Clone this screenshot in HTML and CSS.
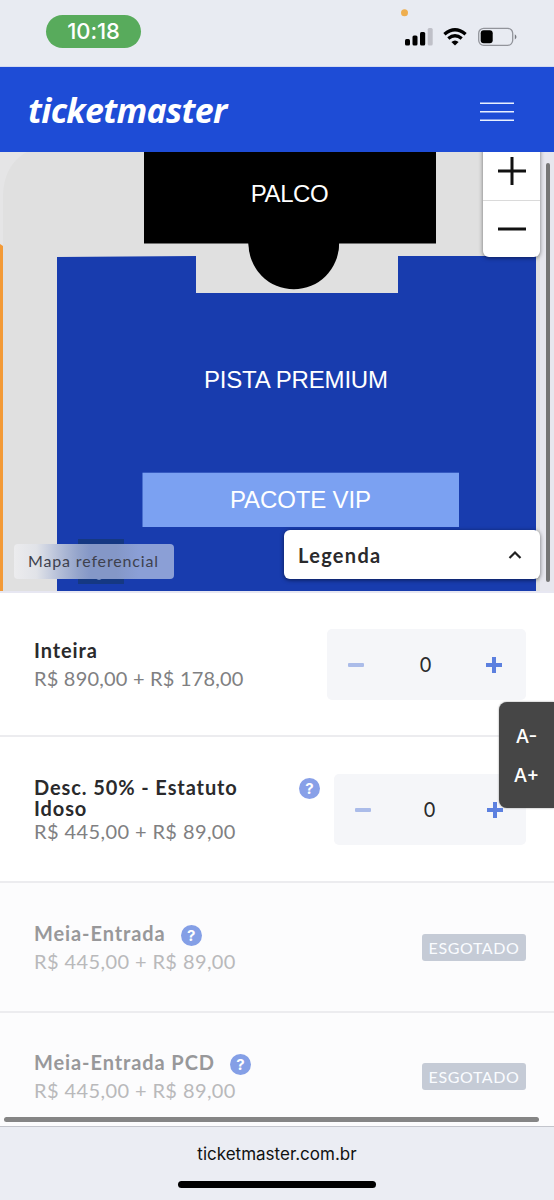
FILE: index.html
```html
<!DOCTYPE html>
<html lang="pt-BR">
<head>
<meta charset="utf-8">
<title>Ticketmaster</title>
<link rel="stylesheet" href="styles.css">
</head>
<body>
<div class="status">
  <span class="clock">10:18</span>
  <svg class="status-icons" width="134" height="67" viewBox="0 0 134 67">
    <circle cx="4.500" cy="12.700" r="3.500" fill="#eeae4f"/>
    <rect x="5" y="39" width="5" height="6.500" rx="1.500"/>
    <rect x="12.500" y="35.500" width="5" height="10" rx="1.500"/>
    <rect x="20" y="32" width="5.200" height="13.500" rx="1.500"/>
    <rect x="27.700" y="28" width="5" height="17.500" rx="1.500" fill="#bfc0c8"/>
    <g fill="none" stroke="#000" stroke-width="3.300">
      <path d="M44.400 34.200Q55 25.200 65.600 34.200"/>
      <path d="M48.300 38.600Q55 33 61.700 38.600"/>
    </g>
    <path d="M51.400 42Q55 39 58.600 42L55 45.500Z"/>
    <rect x="78.700" y="28.300" width="34" height="17" rx="5" fill="none" stroke="#92949b" stroke-width="1.300"/>
    <rect x="80.700" y="30.300" width="12" height="13" rx="3"/>
    <path d="M114.800 34.200Q118.200 36.800 114.800 39.600Z" fill="#777980"/>
  </svg>
</div>
<header class="header">
  <span class="logo">ticketmaster</span>
  <svg class="menu" width="34" height="20" viewBox="0 0 34 20"><path d="M0 1.300H34M0 9.800H34M0 18.300H34"/></svg>
</header>
<section class="map">
  <svg class="seats" width="554" height="439" viewBox="0 152 554 439">
    <rect y="152" width="554" height="439" fill="#e5e5e6"/>
    <path d="M3 591V198C3 175 12 160 27 152H541V591Z" fill="#e0e0e0"/>
    <rect x="540" y="152" width="14" height="439" fill="#e7e7ee"/>
    <path d="M0 244L3 246V591H0Z" fill="#f39a37"/>
    <path d="M57 257L196 256V293H398V256H536V591H57Z" fill="#183cae"/>
    <path d="M144 152H436V243.500H339A45.300 45.800 0 0 1 248.500 243.500H144Z"/>
    <ellipse cx="293.800" cy="243.500" rx="45.300" ry="45.800"/>
    <rect x="142.500" y="472.700" width="316.500" height="54.300" fill="#7ba1f2"/>
    <rect x="78" y="539" width="46" height="45" fill="#153882"/>
    <path d="M95 578H103Q99 581.500 95 578Z" fill="#9db0dc"/>
    <text x="289.700" y="202" textLength="78">PALCO</text>
    <text x="296" y="388" textLength="184">PISTA PREMIUM</text>
    <text x="300.500" y="507.500" textLength="141">PACOTE VIP</text>
  </svg>
  <div class="zoom">
    <span><svg width="30" height="30" viewBox="0 0 30 30"><path d="M1 15H29M15 1V29"/></svg></span>
    <span><svg width="30" height="30" viewBox="0 0 30 30"><path d="M1 15H29"/></svg></span>
  </div>
  <i class="map-scroll"></i>
  <span class="ref">Mapa referencial</span>
  <div class="legend"><b>Legenda</b><svg width="14" height="10" viewBox="0 0 14 10"><path d="M1.500 8L7 2.500L12.500 8"/></svg></div>
</section>
<main class="tickets">
  <article class="row first">
    <div class="info"><h2>Inteira</h2><p>R$ 890,00 + R$ 178,00</p></div>
    <div class="stepper wide"><i class="minus"></i><span>0</span><i class="plus"></i></div>
  </article>
  <article class="row second">
    <div class="info"><h2>Desc. 50% - Estatuto Idoso</h2><p class="short">R$ 445,00 + R$ 89,00</p></div>
    <span class="help">?</span>
    <div class="stepper"><i class="minus"></i><span>0</span><i class="plus"></i></div>
  </article>
  <article class="row sold">
    <div class="info"><h2><span>Meia-Entrada</span><span class="help">?</span></h2><p class="short">R$ 445,00 + R$ 89,00</p></div>
    <span class="badge">ESGOTADO</span>
  </article>
  <article class="row sold last">
    <div class="info"><h2><span>Meia-Entrada PCD</span><span class="help">?</span></h2><p class="short">R$ 445,00 + R$ 89,00</p></div>
    <span class="badge">ESGOTADO</span>
  </article>
  <div class="fontsize"><span>A-</span><span>A+</span></div>
  <i class="page-scroll"></i>
</main>
<footer class="bottom"><span>ticketmaster.com.br</span><i></i></footer>
</body>
</html>
```

FILE: styles.css
```css
* { box-sizing: border-box; margin: 0; padding: 0; }
body { width: 554px; height: 1200px; overflow: hidden; background: #fff; font-family: Lato, "Open Sans", sans-serif; color: #2a2a2c; }
i { font-style: normal; display: block; }
svg { display: block; }
.status { height: 67px; background: #e8ebf2; display: flex; align-items: flex-start; padding: 15px 20px 0 46px; justify-content: space-between; border-bottom: 1px solid #d3daf0; }
.clock { width: 95px; height: 33px; border-radius: 17px; background: #58ab5c; color: #fff; font: 500 22px/33px Inter, sans-serif; text-align: center; letter-spacing: -.100px; }
.status-icons { margin-top: -15px; }
.header { height: 85px; background: #1e4cd6; display: flex; align-items: center; justify-content: space-between; padding: 0 40px 0 28px; }
.logo { color: #fff; font: italic 700 34px/40px "Open Sans", sans-serif; letter-spacing: -.700px; }
.menu { margin-top: 4px; }
.menu path { stroke: #e9f0ff; stroke-width: 1.600; }
.map { position: relative; height: 441px; border-bottom: 2px solid #e7e7f2; overflow: hidden; }
.seats text { fill: #fff; font: 24px "Liberation Sans", sans-serif; text-anchor: middle; }
.zoom { position: absolute; top: -10px; right: 14px; width: 57px; height: 115px; border-radius: 6px; background: #fff; box-shadow: 0 1px 4px rgba(0,0,0,.5); display: grid; grid-template-rows: 1fr 1fr; }
.zoom span { display: grid; place-items: center; }
.zoom span + span { border-top: 1px solid #dadada; }
.zoom path { stroke: #111; stroke-width: 3; }
.map-scroll { position: absolute; left: 546px; top: 11px; width: 4px; height: 419px; border-radius: 2px; background: #767676; }
.ref { position: absolute; left: 14px; top: 392px; width: 160px; height: 35px; border-radius: 4px; background: linear-gradient(90deg, #ececee 0, #e1e3e8 14%, #b5bfd8 28%, #94a4cb 40%, #8497c7 48%, #8497c7 64%, #8b9fd6 78%, #8b9fd6 100%); padding-left: 14px; font-size: 16px; line-height: 34px; color: #3e414d; white-space: nowrap; letter-spacing: .850px; }
.legend { position: absolute; left: 284px; top: 378px; width: 256px; height: 49px; border-radius: 6px; background: #fff; box-shadow: 0 1px 4px rgba(0,0,0,.55); display: flex; align-items: center; justify-content: space-between; padding: 0 18px 0 14px; font-size: 20px; letter-spacing: 1.300px; }
.legend path { fill: none; stroke: #222; stroke-width: 2.200; }
.tickets { position: relative; height: 533px; overflow: hidden; }
.row { display: flex; align-items: flex-start; padding: 0 28px 0 34px; border-bottom: 2px solid #ececef; }
.info { flex: 1; }
.row h2 { font-size: 20px; line-height: 21px; font-weight: 700; letter-spacing: .900px; }
.row p { font-size: 20px; line-height: 24px; color: #808082; letter-spacing: .200px; white-space: nowrap; }
.row p.short { letter-spacing: .400px; }
.first { height: 144px; padding-top: 36px; }
.first .info { padding-top: 11px; }
.first p { margin-top: 5px; }
.second { height: 146px; padding-top: 37px; }
.second .info { padding-top: 3px; }
.second h2 { width: 230px; }
.help { flex: none; width: 21px; height: 21px; border-radius: 50%; background: #88a0e8; color: #fff; font: 700 15px/21px Inter, sans-serif; text-align: center; letter-spacing: 0; }
.second > .help { margin: 4px 14px 0 0; }
.stepper { width: 192px; height: 71px; border-radius: 5px; background: #f5f6f9; display: grid; grid-template-columns: 57px 1fr 63px; place-items: center; font: 20px Inter, sans-serif; }
.stepper.wide { width: 199px; grid-template-columns: 58px 1fr 65px; }
.stepper span { padding-left: 5px; }
.minus { width: 16px; height: 4px; border-radius: 1px; background: #abbce9; }
.plus { width: 16px; height: 16px; background: linear-gradient(#5c80df, #5c80df) center / 16px 4px no-repeat, linear-gradient(#5c80df, #5c80df) center / 4px 16px no-repeat; }
.sold { height: 130px; padding-top: 51px; background: #fcfcfd; }
.sold h2 { display: flex; align-items: center; color: #98989a; margin-top: -11px; }
.sold p { color: #b9b9bb; margin-top: 5px; }
.sold .help { margin: 2px 0 -2px 15px; background: #849fe6; }
.sold .badge { width: 104px; height: 27px; border-radius: 3px; background: #c5cbd6; color: #fafcff; font-size: 16px; line-height: 27px; text-align: center; letter-spacing: .600px; white-space: nowrap; }
.last { height: 114px; border: 0; padding-top: 50px; }
.fontsize { position: absolute; top: 109px; right: 0; width: 55px; height: 106px; border-radius: 8px 0 0 8px; background: #464646; box-shadow: 0 0 2px #888; color: #fff; font: 500 19px/39px Inter, sans-serif; padding: 15px 0 0 0; display: flex; flex-direction: column; align-items: center; }
.page-scroll { position: absolute; left: 4px; top: 524px; width: 535px; height: 5px; border-radius: 3px; background: #858585; }
.bottom { height: 74px; border-top: 1px solid #c3c5cc; background: #ebedf3; display: flex; flex-direction: column; align-items: center; font: 17px/22px Inter, sans-serif; color: #111; padding-top: 16px; }
.bottom i { width: 198px; height: 7px; border-radius: 4px; background: #000; margin-top: 16px; }
```
